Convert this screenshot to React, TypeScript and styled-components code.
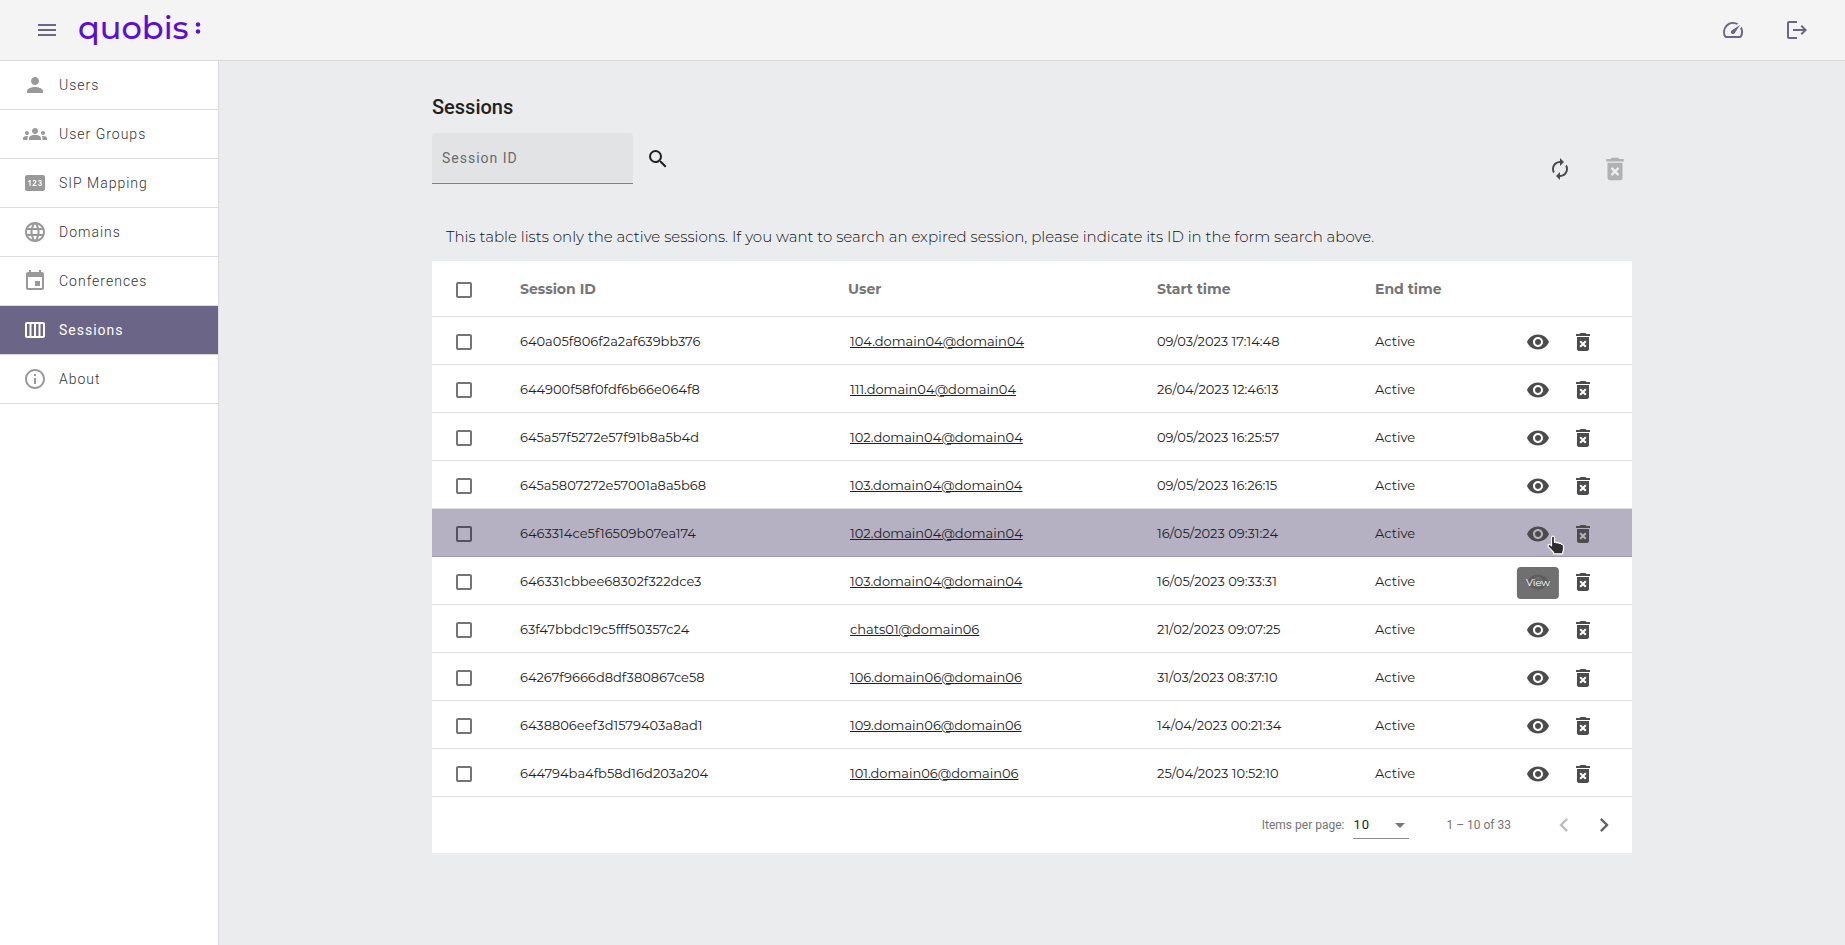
import React from 'react';
import styled, { createGlobalStyle } from 'styled-components';
import {
  MdMenu,
  MdPerson,
  MdGroups,
  MdPin,
  MdLanguage,
  MdEvent,
  MdOutlineCalendarViewWeek,
  MdInfoOutline,
  MdSpeed,
  MdLogout,
  MdSearch,
  MdAutorenew,
  MdDeleteForever,
  MdVisibility,
  MdChevronLeft,
  MdChevronRight,
  MdArrowDropDown,
} from 'react-icons/md';

const roboto = "Roboto, 'Liberation Sans', sans-serif";
const montserrat = "Montserrat, Inter, 'Liberation Sans', sans-serif";

const GlobalStyle = createGlobalStyle`
  *, *::before, *::after { box-sizing: border-box; }
  body {
    margin: 0;
    background: #ebecee;
    color: #212121;
    font-family: ${roboto};
  }
`;

const Page = styled.div`
  display: flex;
  flex-direction: column;
  min-height: 100vh;
`;

const TopBar = styled.header`
  display: flex;
  align-items: center;
  height: 61px;
  padding: 0 36px 0 35px;
  background: #f4f4f4;
  border-bottom: 1px solid #d9d9db;
`;

const IconButton = styled.button<{ $size?: number; $color?: string }>`
  display: inline-flex;
  align-items: center;
  justify-content: center;
  flex: none;
  padding: 0;
  border: 0;
  background: none;
  color: ${(p) => p.$color ?? '#4c4c4c'};
  font-size: ${(p) => p.$size ?? 24}px;
  cursor: pointer;
  &:disabled { cursor: default; }
`;

const Logo = styled.a`
  display: flex;
  align-items: center;
  gap: 6px;
  margin-left: 19px;
  padding-bottom: 5px;
  color: #5b0fd6;
  font: 500 32px/44px ${montserrat};
  text-decoration: none;
`;

const TopActions = styled.div`
  display: flex;
  gap: 40px;
  margin-left: auto;
`;

const Body = styled.div`
  display: flex;
  flex: 1;
`;

const SideNav = styled.nav`
  flex: none;
  width: 219px;
  background: #fff;
  border-right: 1px solid #dcdcde;
`;

const NavLink = styled.a<{ $active?: boolean }>`
  display: flex;
  align-items: center;
  gap: 12px;
  height: 49px;
  padding-left: 23px;
  border-bottom: 1px solid #dcdcde;
  background: ${(p) => (p.$active ? '#6b6687' : 'transparent')};
  color: ${(p) => (p.$active ? '#fff' : '#333')};
  font-size: 14px;
  font-weight: ${(p) => (p.$active ? 400 : 300)};
  letter-spacing: 1px;
  text-decoration: none;
  svg {
    flex: none;
    font-size: 24px;
    color: ${(p) => (p.$active ? '#fff' : '#999')};
  }
`;

const Main = styled.main`
  flex: 1;
  padding: 32px 24px 40px;
`;

const Content = styled.div`
  max-width: 1200px;
  margin: 0 auto;
`;

const Title = styled.h1`
  margin: 0 0 12px;
  font-size: 20px;
  font-weight: 500;
  line-height: 28px;
`;

const Toolbar = styled.div`
  display: flex;
  align-items: flex-start;
  height: 52px;
`;

const SearchForm = styled.form`
  display: flex;
  align-items: center;
  gap: 13px;
`;

const SearchInput = styled.input`
  width: 201px;
  height: 51px;
  padding: 0 10px;
  border: 0;
  border-bottom: 1px solid #808083;
  border-radius: 4px 4px 0 0;
  background: #e2e3e5;
  color: #212121;
  font: 400 14px ${roboto};
  letter-spacing: 1px;
  outline: none;
  &::placeholder { color: #6a6b6c; opacity: 1; }
`;

const BulkActions = styled.div`
  display: flex;
  align-items: center;
  gap: 28px;
  margin-left: auto;
  padding: 21px 2px 0 0;
`;

const Hint = styled.p`
  margin: 40px 0 12px;
  padding-left: 14px;
  color: #111;
  font: 300 15px/24px ${montserrat};
`;

const Card = styled.section`
  background: #fff;
`;

const Table = styled.table`
  width: 100%;
  border-collapse: separate;
  border-spacing: 0;
  table-layout: fixed;
  font-family: ${montserrat};
  th, td {
    padding: 0;
    border-bottom: 1px solid #dfdfdf;
    text-align: left;
    vertical-align: middle;
  }
`;

const HeadCell = styled.th<{ $width?: string }>`
  width: ${(p) => p.$width ?? 'auto'};
  height: 56px;
  color: #757575;
  font-size: 14px;
  font-weight: 700;
`;

const Row = styled.tr<{ $hovered?: boolean }>`
  background: ${(p) => (p.$hovered ? '#b5b1c3' : 'transparent')};
  td { border-color: ${(p) => (p.$hovered ? '#9e99af' : '#dfdfdf')}; }
  input { border-color: ${(p) => (p.$hovered ? '#545260' : '#757575')}; }
`;

const Cell = styled.td`
  height: 48px;
  color: #212121;
  font-size: 13px;
`;

const Checkbox = styled.input`
  appearance: none;
  display: block;
  width: 16px;
  height: 16px;
  margin: 2px 0 0 24px;
  border: 2px solid #757575;
  border-radius: 2px;
  &:checked { background: #6b6687; }
`;

const UserLink = styled.a`
  margin-left: 2px;
  color: inherit;
  text-decoration: underline;
`;

const RowActions = styled.div`
  display: flex;
  justify-content: flex-end;
  gap: 21px;
  padding: 2px 37px 0 0;
`;

const TooltipAnchor = styled.span`
  position: relative;
  display: inline-flex;
`;

const Tooltip = styled.span`
  position: absolute;
  top: 45px;
  left: 50%;
  z-index: 1;
  padding: 0 9px;
  border-radius: 4px;
  background: rgba(97, 97, 97, 0.9);
  color: #fff;
  font: 400 10px/32px ${montserrat};
  transform: translateX(-50%);
`;

const HandPointer = styled.svg`
  position: absolute;
  top: 13px;
  left: 21px;
  z-index: 2;
`;

const Paginator = styled.footer`
  display: flex;
  align-items: center;
  justify-content: flex-end;
  height: 56px;
  padding-right: 14px;
  color: #757575;
  font-size: 12px;
`;

const PageSize = styled.label`
  display: flex;
  align-items: center;
  gap: 9px;
`;

const SelectBox = styled.span`
  position: relative;
  display: flex;
  border-bottom: 1px solid #8c8c8c;
  svg {
    position: absolute;
    right: -3px;
    top: 1px;
    font-size: 24px;
    pointer-events: none;
  }
`;

const Select = styled.select`
  appearance: none;
  width: 56px;
  height: 26px;
  padding: 0;
  border: 0;
  background: none;
  color: #212121;
  font: 400 13px ${roboto};
  letter-spacing: 1px;
`;

const Range = styled.span`
  margin: 0 39px 0 37px;
`;

const PageButtons = styled.div`
  display: flex;
  gap: 12px;
`;

const navItems = [
  { label: 'Users', icon: MdPerson },
  { label: 'User Groups', icon: MdGroups },
  { label: 'SIP Mapping', icon: MdPin },
  { label: 'Domains', icon: MdLanguage },
  { label: 'Conferences', icon: MdEvent },
  { label: 'Sessions', icon: MdOutlineCalendarViewWeek, active: true },
  { label: 'About', icon: MdInfoOutline },
];

const sessions = [
  { id: '640a05f806f2a2af639bb376', user: '104.domain04@domain04', start: '09/03/2023 17:14:48' },
  { id: '644900f58f0fdf6b66e064f8', user: '111.domain04@domain04', start: '26/04/2023 12:46:13' },
  { id: '645a57f5272e57f91b8a5b4d', user: '102.domain04@domain04', start: '09/05/2023 16:25:57' },
  { id: '645a5807272e57001a8a5b68', user: '103.domain04@domain04', start: '09/05/2023 16:26:15' },
  { id: '6463314ce5f16509b07ea174', user: '102.domain04@domain04', start: '16/05/2023 09:31:24', hovered: true },
  { id: '646331cbbee68302f322dce3', user: '103.domain04@domain04', start: '16/05/2023 09:33:31' },
  { id: '63f47bbdc19c5fff50357c24', user: 'chats01@domain06', start: '21/02/2023 09:07:25' },
  { id: '64267f9666d8df380867ce58', user: '106.domain06@domain06', start: '31/03/2023 08:37:10' },
  { id: '6438806eef3d1579403a8ad1', user: '109.domain06@domain06', start: '14/04/2023 00:21:34' },
  { id: '644794ba4fb58d16d203a204', user: '101.domain06@domain06', start: '25/04/2023 10:52:10' },
];

function Pointer() {
  return (
    <HandPointer width="18" height="20" viewBox="0 0 18 20" aria-hidden="true">
      <path
        d="M4.5 2.5c0-1.9 3-1.9 3 0v5c.7-.6 2-.5 2.400.4.8-.6 2-.4 2.400.5 1-.5 2.200.1 2.300 1.100 1-.1 1.900.5 1.900 1.600v3.400c0 1.200-.4 1.900-.8 2.600v1.700H6.600v-1.500L1.400 11.800c-1.200-1.700.8-3.200 2.100-1.900l1 1z"
        fill="#2e2e2e"
        stroke="#fff"
        strokeWidth="1.200"
        strokeLinejoin="round"
      />
    </HandPointer>
  );
}

export default function App() {
  return (
    <Page>
      <GlobalStyle />
      <TopBar>
        <IconButton $color="#6b6687" aria-label="Toggle menu"><MdMenu /></IconButton>
        <Logo href="#">
          <span>quobis</span>
          <svg width="6" height="12" viewBox="0 0 6 12" fill="currentColor" aria-hidden="true">
            <circle cx="3" cy="2.500" r="2.200" />
            <circle cx="3" cy="9.500" r="2.200" />
          </svg>
        </Logo>
        <TopActions>
          <IconButton $color="#6b6687" aria-label="Dashboard"><MdSpeed /></IconButton>
          <IconButton $color="#6b6687" aria-label="Log out"><MdLogout /></IconButton>
        </TopActions>
      </TopBar>
      <Body>
        <SideNav>
          {navItems.map(({ label, icon: Icon, active }) => (
            <NavLink key={label} href="#" $active={active}>
              <Icon />
              {label}
            </NavLink>
          ))}
        </SideNav>
        <Main>
          <Content>
            <Title>Sessions</Title>
            <Toolbar>
              <SearchForm>
                <SearchInput placeholder="Session ID" aria-label="Session ID" />
                <IconButton type="button" $color="#212121" aria-label="Search"><MdSearch /></IconButton>
              </SearchForm>
              <BulkActions>
                <IconButton aria-label="Refresh"><MdAutorenew /></IconButton>
                <IconButton $size={30} $color="#b0b1b2" disabled aria-label="Delete selected">
                  <MdDeleteForever />
                </IconButton>
              </BulkActions>
            </Toolbar>
            <Hint>
              This table lists only the active sessions. If you want to search an expired session, please
              indicate its ID in the form search above.
            </Hint>
            <Card>
              <Table>
                <thead>
                  <tr>
                    <HeadCell $width="88px"><Checkbox type="checkbox" aria-label="Select all" /></HeadCell>
                    <HeadCell $width="328px">Session ID</HeadCell>
                    <HeadCell $width="309px">User</HeadCell>
                    <HeadCell $width="218px">Start time</HeadCell>
                    <HeadCell>End time</HeadCell>
                    <HeadCell />
                  </tr>
                </thead>
                <tbody>
                  {sessions.map((s) => (
                    <Row key={s.id} $hovered={s.hovered}>
                      <Cell><Checkbox type="checkbox" aria-label={`Select ${s.id}`} /></Cell>
                      <Cell>{s.id}</Cell>
                      <Cell><UserLink href="#">{s.user}</UserLink></Cell>
                      <Cell>{s.start}</Cell>
                      <Cell>Active</Cell>
                      <Cell>
                        <RowActions>
                          <TooltipAnchor>
                            <IconButton aria-label="View session"><MdVisibility /></IconButton>
                            {s.hovered && <Tooltip role="tooltip">View</Tooltip>}
                            {s.hovered && <Pointer />}
                          </TooltipAnchor>
                          <IconButton aria-label="Delete session"><MdDeleteForever /></IconButton>
                        </RowActions>
                      </Cell>
                    </Row>
                  ))}
                </tbody>
              </Table>
              <Paginator>
                <PageSize>
                  Items per page:
                  <SelectBox>
                    <Select defaultValue="10">
                      <option>10</option>
                      <option>25</option>
                      <option>50</option>
                    </Select>
                    <MdArrowDropDown />
                  </SelectBox>
                </PageSize>
                <Range>1 – 10 of 33</Range>
                <PageButtons>
                  <IconButton $size={28} $color="#bdbdbd" disabled aria-label="Previous page"><MdChevronLeft /></IconButton>
                  <IconButton $size={28} $color="#616161" aria-label="Next page"><MdChevronRight /></IconButton>
                </PageButtons>
              </Paginator>
            </Card>
          </Content>
        </Main>
      </Body>
    </Page>
  );
}
